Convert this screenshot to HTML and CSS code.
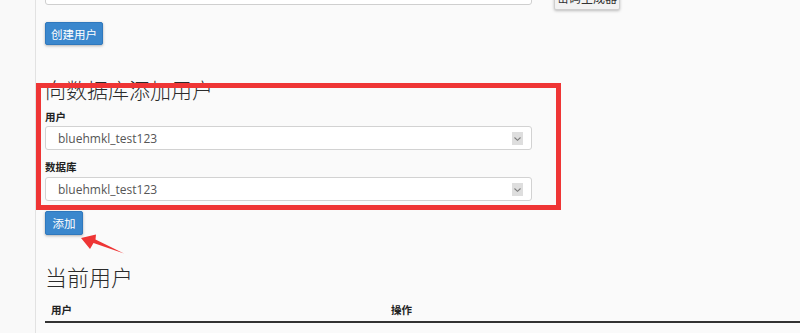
FILE: index.html
```html
<!DOCTYPE html>
<html lang="zh-CN">
<head>
<meta charset="utf-8">
<title>MySQL 数据库</title>
<link rel="stylesheet" href="styles.css">
</head>
<body>
<div class="layout">
  <aside class="side"></aside>
  <main class="main">
    <div class="pw-row">
      <div class="strength"><span>非常弱 (0/100)</span></div>
      <button class="gen">密码生成器</button>
    </div>
    <button class="btn btn-create">创建用户</button>

    <section class="add">
      <h2 class="title">向数据库添加用户</h2>
      <label class="lbl">用户</label>
      <div class="select"><span>bluehmkl_test123</span><i class="caret"><svg viewBox="0 0 11 13" width="11" height="13"><path d="M2.5 5.5 L5.5 8.3 L8.5 5.5" fill="none" stroke="#7d7d7d" stroke-width="1.1"/></svg></i></div>
      <label class="lbl lbl-2">数据库</label>
      <div class="select"><span>bluehmkl_test123</span><i class="caret"><svg viewBox="0 0 11 13" width="11" height="13"><path d="M2.5 5.5 L5.5 8.3 L8.5 5.5" fill="none" stroke="#7d7d7d" stroke-width="1.1"/></svg></i></div>
    </section>
    <button class="btn btn-add">添加</button>

    <h2 class="title title-users">当前用户</h2>
    <table class="users">
      <thead>
        <tr><th class="col-user">用户</th><th>操作</th></tr>
      </thead>
    </table>
  </main>

  <div class="annot-box"></div>
  <svg class="annot-arrow" viewBox="0 0 800 333" width="800" height="333">
    <polygon points="81,238 96,234.5 95.5,239.5 124,253.5 93.5,243 90,249" fill="#ee3535"/>
  </svg>
</div>
</body>
</html>
```

FILE: styles.css
```css
html, body {
  margin: 0;
  padding: 0;
  background: #fafafa;
  height: 100%;
  overflow: hidden;
}

body {
  font-family: "Open Sans", "Noto Sans CJK SC", sans-serif;
  font-size: 12px;
  color: #333;
}

.layout {
  position: relative;
  display: flex;
  min-height: 333px;
}

.side {
  width: 35px;
  flex: none;
  background: #f9f9f9;
  border-right: 1px solid #e2e2e2;
}

.main {
  flex: 1;
  padding-left: 9px;
}

.pw-row {
  display: flex;
  align-items: flex-start;
  margin-top: -19px;
}

.strength {
  width: 487px;
  height: 24px;
  box-sizing: border-box;
  border: 1px solid #cfcfcf;
  border-radius: 3px;
  background: #fff;
  text-align: center;
  line-height: 17px;
  color: #444;
  font-size: 12px;
}

.gen {
  margin: 5px 0 0 22px;
  width: 66px;
  height: 24px;
  padding: 0;
  border: 1px solid #cfcfcf;
  border-radius: 2px;
  background: #f2f2f2;
  box-shadow: 0 1px 3px rgba(0,0,0,0.25);
  font-family: "Noto Sans CJK SC", sans-serif;
  font-size: 12px;
  line-height: 14px;
  color: #333;
  white-space: nowrap;
}

.btn {
  display: block;
  height: 24px;
  padding: 0 8px;
  border: 1px solid #2f78bd;
  border-radius: 2px;
  background: #3a87cd;
  color: #fff;
  font-family: "Noto Sans CJK SC", sans-serif;
  font-size: 11.5px;
  line-height: 20px;
  white-space: nowrap;
  box-shadow: 0 1px 3px rgba(0,0,0,0.3);
}

.btn-create {
  margin-top: 12px;
  height: 23px;
  width: 58px;
  padding: 0;
  text-align: center;
}

.add {
  width: 487px;
}

.title {
  margin: 32px 0 0;
  font-family: "Noto Sans CJK SC", sans-serif;
  font-weight: 300;
  font-size: 21px;
  line-height: 24px;
  color: #2b2b2b;
}

.lbl {
  display: block;
  margin-top: 9px;
  font-family: "Noto Sans CJK SC", sans-serif;
  font-weight: 700;
  font-size: 10.5px;
  line-height: 14px;
  color: #222;
}

.lbl-2 {
  margin-top: 10px;
}

.select {
  display: flex;
  align-items: center;
  justify-content: space-between;
  margin-top: 2px;
  height: 24px;
  box-sizing: border-box;
  padding: 0 8px 0 12px;
  border: 1px solid #d2d2d2;
  border-radius: 3px;
  background: #fff;
  color: #555;
  font-size: 12px;
}

.lbl-2 + .select {
  margin-top: 3px;
}

.caret {
  display: block;
  width: 11px;
  height: 13px;
  background: #dedede;
}

.caret svg {
  display: block;
}

.btn-add {
  margin-top: 10px;
  width: 38px;
  padding: 0;
}

.title-users {
  margin-top: 28px;
  font-size: 22px;
  line-height: 26px;
}

.users {
  width: 100%;
  margin-top: 4px;
  border-collapse: collapse;
}

.users th {
  text-align: left;
  padding: 10px 6px 4px;
  border-bottom: 2px solid #333;
  font-family: "Noto Sans CJK SC", sans-serif;
  font-weight: 700;
  font-size: 10.5px;
  line-height: 14px;
  color: #222;
}

.users .col-user {
  width: 328px;
}

.annot-box {
  position: absolute;
  left: 36px;
  top: 83px;
  width: 525px;
  height: 127px;
  box-sizing: border-box;
  border: 5px solid #ef3535;
}

.annot-arrow {
  position: absolute;
  left: 0;
  top: 0;
  pointer-events: none;
}
```
